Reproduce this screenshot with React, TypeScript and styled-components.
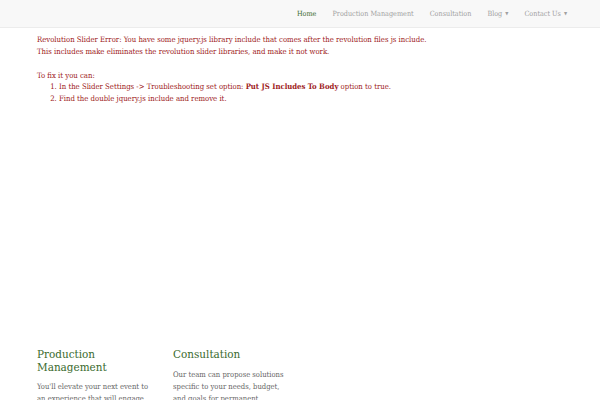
import React from "react";
import styled, { createGlobalStyle } from "styled-components";

const Global = createGlobalStyle`
  html, body { margin: 0; padding: 0; background: #fff; }
  body { font-family: "DejaVu Serif Condensed", "DejaVu Serif", serif; font-stretch: condensed; }
`;

const Header = styled.header`
  height: 27px;
  background: #f8f8f8;
  border-bottom: 1px solid #ececec;
  display: flex;
  justify-content: flex-end;
  align-items: center;
  padding-right: 33px;
`;

const Nav = styled.nav`
  display: flex;
  gap: 16px;
  align-items: center;
`;

const NavItem = styled.a<{ $active?: boolean }>`
  font-size: 7.2px;
  color: ${(p) => (p.$active ? "#3a6a2e" : "#a0a0a0")};
  text-decoration: none;
  display: flex;
  align-items: center;
  gap: 3px;
`;

const Caret = styled.span`
  font-size: 4.5px;
  color: #a0a0a0;
`;

const ErrorBox = styled.div`
  padding: 6px 0 0 37px;
  color: #9e2222;
  font-size: 7.7px;
  line-height: 11.5px;
`;

const Para = styled.p`
  margin: 0;
`;

const Gap = styled.div`
  height: 12.5px;
`;

const List = styled.ol`
  margin: 0;
  padding-left: 22px;
`;

const Slider = styled.div`
  height: 244px;
`;

const Features = styled.section`
  display: grid;
  grid-template-columns: repeat(4, 120px);
  column-gap: 16px;
  padding-left: 37px;
`;

const Feature = styled.div`
  display: flex;
  flex-direction: column;
`;

const FeatureTitle = styled.h3`
  margin: 0 0 8px;
  font-weight: normal;
  font-size: 11.6px;
  line-height: 12.5px;
  color: #3a6a2e;
`;

const FeatureText = styled.p`
  margin: 0;
  font-size: 7.6px;
  line-height: 12px;
  color: #666;
`;

export default function App() {
  return (
    <>
      <Global />
      <Header>
        <Nav>
          <NavItem $active>Home</NavItem>
          <NavItem>Production Management</NavItem>
          <NavItem>Consultation</NavItem>
          <NavItem>
            Blog <Caret>▼</Caret>
          </NavItem>
          <NavItem>
            Contact Us <Caret>▼</Caret>
          </NavItem>
        </Nav>
      </Header>
      <ErrorBox>
        <Para>
          Revolution Slider Error: You have some jquery.js library include that
          comes after the revolution files js include.
        </Para>
        <Para>
          This includes make eliminates the revolution slider libraries, and make
          it not work.
        </Para>
        <Gap />
        <Para>To fix it you can:</Para>
        <List>
          <li>
            In the Slider Settings -&gt; Troubleshooting set option:{" "}
            <strong>Put JS Includes To Body</strong> option to true.
          </li>
          <li>Find the double jquery.js include and remove it.</li>
        </List>
      </ErrorBox>
      <Slider />
      <Features>
        <Feature>
          <FeatureTitle>Production Management</FeatureTitle>
          <FeatureText>
            You'll elevate your next event to an experience that will engage
            your audience
          </FeatureText>
        </Feature>
        <Feature>
          <FeatureTitle>Consultation</FeatureTitle>
          <FeatureText>
            Our team can propose solutions specific to your needs, budget, and
            goals for permanent installations
          </FeatureText>
        </Feature>
      </Features>
    </>
  );
}
